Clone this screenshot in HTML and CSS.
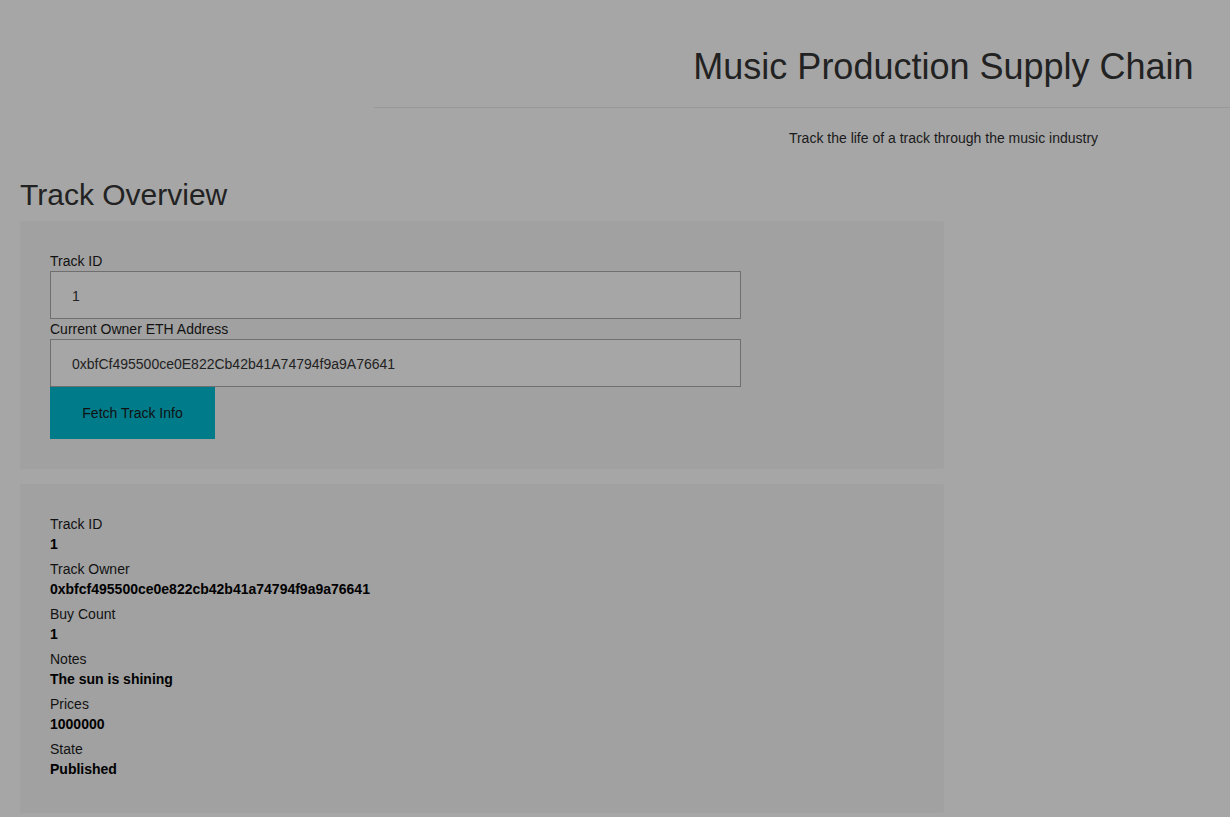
FILE: index.html
```html
<!DOCTYPE html>
<html>
<head>
<meta charset="utf-8">
<link rel="stylesheet" href="styles.css">
</head>
<body>
<header class="header">
  <h1 class="title">Music Production Supply Chain</h1>
  <hr class="rule">
  <p class="subtitle">Track the life of a track through the music industry</p>
</header>
<main class="main">
  <h2 class="section-title">Track Overview</h2>
  <section class="panel form-panel">
    <label class="field-label">Track ID</label>
    <input class="field-input" type="text" value="1">
    <label class="field-label">Current Owner ETH Address</label>
    <input class="field-input" type="text" value="0xbfCf495500ce0E822Cb42b41A74794f9a9A76641">
    <button class="btn">Fetch Track Info</button>
  </section>
  <section class="panel info-panel">
    <div class="item"><div class="item-label">Track ID</div><div class="item-value">1</div></div>
    <div class="item"><div class="item-label">Track Owner</div><div class="item-value">0xbfcf495500ce0e822cb42b41a74794f9a9a76641</div></div>
    <div class="item"><div class="item-label">Buy Count</div><div class="item-value">1</div></div>
    <div class="item"><div class="item-label">Notes</div><div class="item-value">The sun is shining</div></div>
    <div class="item"><div class="item-label">Prices</div><div class="item-value">1000000</div></div>
    <div class="item"><div class="item-label">State</div><div class="item-value">Published</div></div>
  </section>
</main>
</body>
</html>
```
FILE: styles.css
```css
* { box-sizing: border-box; }
html, body { margin: 0; padding: 0; }
body {
  background: #a6a6a6;
  font-family: "Liberation Sans", Arial, sans-serif;
  color: #121212;
  font-size: 14px;
  overflow: hidden;
}
.header {
  display: flex;
  flex-direction: column;
  padding-top: 46px;
}
.title {
  margin: 0 0 0 657px;
  text-align: center;
  font-size: 36px;
  font-weight: normal;
  line-height: 42px;
  color: #222;
}
.rule {
  margin: 19px 0 0 374px;
  border: 0;
  border-top: 1px solid #989898;
  height: 0;
}
.subtitle {
  margin: 21px 0 0 657px;
  text-align: center;
  font-size: 14px;
  line-height: 18px;
  color: #1a1a1a;
}
.main {
  padding: 0 20px;
  width: 964px;
}
.section-title {
  margin: 30px 0 0 0;
  font-size: 30px;
  font-weight: normal;
  line-height: 36px;
  color: #222;
}
.panel {
  background: #a1a1a1;
  border-radius: 3px;
  padding: 30px;
}
.form-panel {
  margin-top: 8px;
  display: flex;
  flex-direction: column;
  align-items: flex-start;
}
.field-label {
  font-size: 14px;
  line-height: 20px;
  color: #121212;
}
.field-input {
  width: 691px;
  height: 48px;
  background: #a6a6a6;
  border: 1px solid #6f6f6f;
  padding: 1px 21px 0;
  font-family: "Liberation Sans", Arial, sans-serif;
  font-size: 14px;
  color: #222;
  outline: none;
}
.btn {
  width: 165px;
  height: 52px;
  border: 0;
  background: #007b89;
  color: #111;
  font-family: "Liberation Sans", Arial, sans-serif;
  font-size: 14px;
  cursor: pointer;
}
.info-panel {
  margin-top: 15px;
  padding: 30px 30px 28px;
  height: 329px;
}
.item { margin-bottom: 5px; }
.item-label { line-height: 20px; }
.item-value { line-height: 20px; font-weight: bold; color: #000; }
```
